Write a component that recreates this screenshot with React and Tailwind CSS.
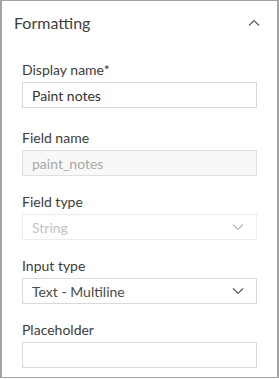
import React from "react";

const Chevron = ({ up = false, light = false }) => (
  <svg width="12" height="8" viewBox="0 0 12 8" className="shrink-0">
    <polyline
      points={up ? "1,6.5 6,1.5 11,6.5" : "1,1.5 6,6.5 11,1.5"}
      fill="none"
      stroke={light ? "#b8b8b8" : "#5a5a5a"}
      strokeWidth="1.2"
    />
  </svg>
);

const Field = ({ label, children, className = "" }) => (
  <div className={className}>
    <div className="h-[20px] leading-[20px] text-[14px] text-[#3c3c3c]">{label}</div>
    <div className="mt-[2px]">{children}</div>
  </div>
);

export default function App() {
  return (
    <div
      className="w-[279px] h-[378px] bg-white border-l-2 border-r-2 border-t border-b border-[#a3a3a3]"
      style={{ fontFamily: "Lato, 'Open Sans', sans-serif" }}
    >
      <div className="h-[43px] flex items-center justify-between pl-[12px] pr-[17px]">
        <span className="text-[16px] text-[#404040]">Formatting</span>
        <Chevron up />
      </div>

      <div className="px-[20px] pt-[16px]">
        <Field label="Display name*">
          <div className="h-[26px] border border-[#d9d9d9] flex items-center px-[9px] text-[14px] text-[#323232]">
            Paint notes
          </div>
        </Field>

        <Field label="Field name" className="mt-[20px]">
          <div className="h-[26px] border border-[#dfdfdf] bg-[#f8f8f8] flex items-center px-[9px] text-[14px] text-[#a8a8a8]">
            paint_notes
          </div>
        </Field>

        <Field label="Field type" className="mt-[16px]">
          <div className="h-[26px] border border-[#ececec] flex items-center justify-between pl-[9px] pr-[12px] text-[14px] text-[#c2c2c2]">
            <span>String</span>
            <Chevron light />
          </div>
        </Field>

        <Field label="Input type" className="mt-[16px]">
          <div className="h-[26px] border border-[#d9d9d9] flex items-center justify-between pl-[9px] pr-[12px] text-[14px] text-[#4a4a4a]">
            <span>Text - Multiline</span>
            <Chevron />
          </div>
        </Field>

        <Field label="Placeholder" className="mt-[16px]">
          <div className="h-[26px] border border-[#d9d9d9]" />
        </Field>
      </div>
    </div>
  );
}
